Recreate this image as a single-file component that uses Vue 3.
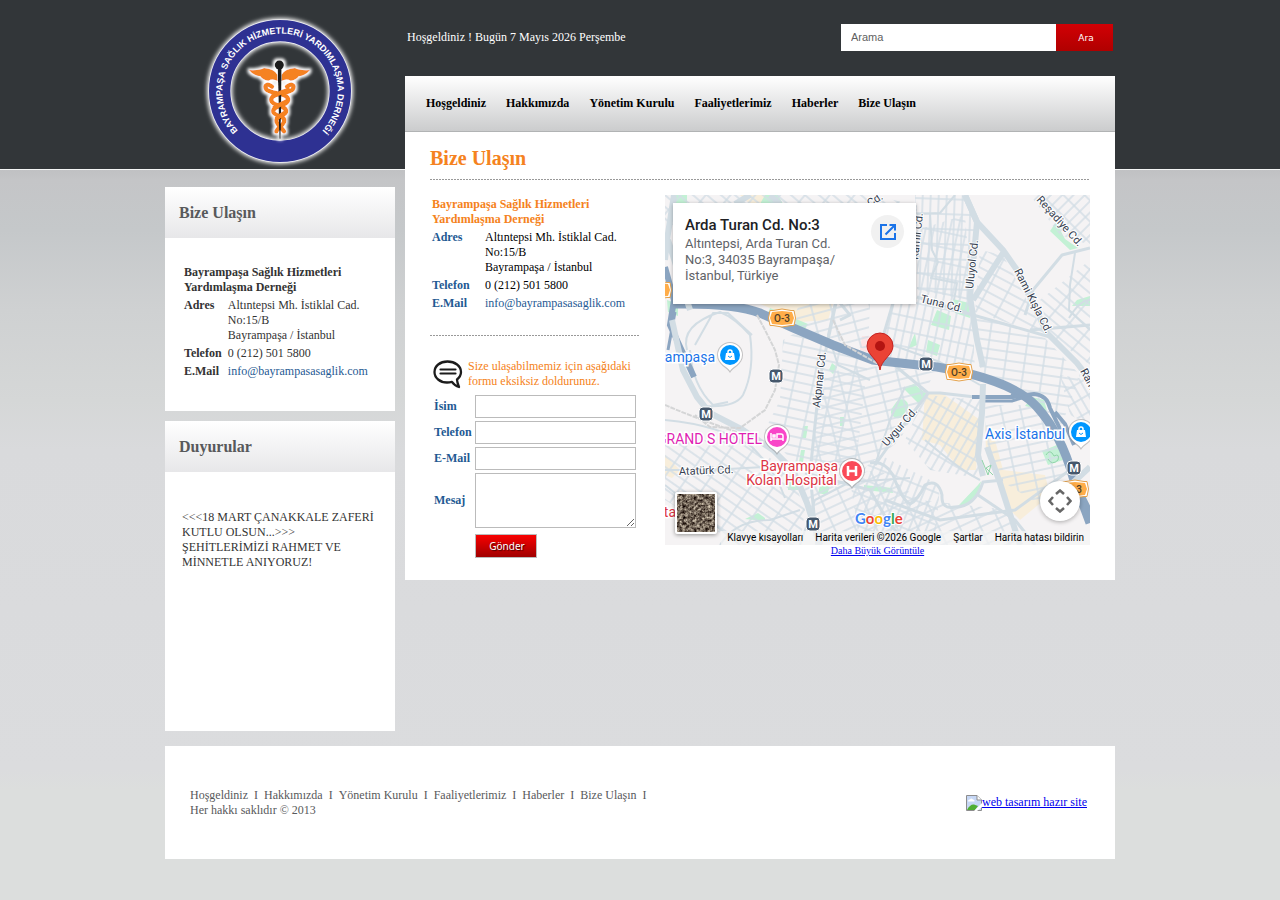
<script setup>
import { ref } from 'vue'

const menu = ['Hoşgeldiniz', 'Hakkımızda', 'Yönetim Kurulu', 'Faaliyetlerimiz', 'Haberler', 'Bize Ulaşın']
const fields = [
  { id: 'isim', label: 'İsim', type: 'text' },
  { id: 'telefon', label: 'Telefon', type: 'tel' },
  { id: 'eposta', label: 'E-Mail', type: 'email' }
]
const form = ref({ isim: '', telefon: '', eposta: '', mesaj: '' })

// Street grids: polygon area, rotation of the grid
const blocks = [
  { p: '783,340 795,333 868,362 855,470 800,470 765,430 780,400', r: 12, g: 'a' },
  { p: '820,375 860,365 935,372 900,440 850,480 812,470', r: -14, g: 'a' },
  { p: '917,230 965,215 972,300 975,372 880,358 893,300 917,296', r: 12, g: 'b' },
  { p: '915,195 965,195 976,225 970,300 917,290', r: 2, g: 'b' },
  { p: '975,315 1045,338 1080,375 1060,430 1035,405 1000,380 980,375', r: 8, g: 'a' },
  { p: '925,395 980,400 978,478 930,470 905,440', r: 30, g: 'b' },
  { p: '985,405 1030,405 1056,440 1070,480 1040,505 1000,480 986,440', r: -12, g: 'a' },
  { p: '665,440 740,440 790,470 805,510 800,545 740,545 665,500', r: 35, g: 'a' },
  { p: '800,480 880,470 920,500 1010,510 1020,545 815,545', r: -25, g: 'a' },
  { p: '850,480 880,455 940,485 935,545 860,545', r: 22, g: 'b' },
  { p: '665,195 870,195 917,205 917,225 665,225', r: 40, g: 'a' },
  { p: '1030,195 1090,195 1090,245 1060,235', r: 45, g: 'b' },
  { p: '980,250 1003,255 1045,335 975,312', r: 28, g: 'a' },
  { p: '1040,300 1090,260 1090,365 1050,335', r: 40, g: 'a' },
  { p: '1060,375 1090,380 1090,425 1070,415', r: -30, g: 'b' },
  { p: '800,303 870,303 868,350 790,325', r: -15, g: 'a' }
]
const metros = [[776, 376], [926, 364], [706, 414], [813, 524], [1074, 468]]
const shields = [[782, 318], [959, 372], [1075, 489], [658, 290]]
const pins = [
  { x: 730, y: 355, c: '#0096ff', k: 'bag' },
  { x: 1081, y: 432, c: '#0096ff', k: 'bag' },
  { x: 777, y: 437, c: '#f946c8', k: 'bed' },
  { x: 852, y: 471, c: '#fa4a58', k: 'hosp' }
]
</script>

<template>
  <div class="site">
    <div class="page">
      <aside class="side">
        <a class="logo" href="#" aria-label="Bayrampaşa Sağlık Hizmetleri Yardımlaşma Derneği">
          <svg viewBox="0 0 540 570" width="180" height="190">
            <defs>
              <filter id="glow" x="-20%" y="-20%" width="140%" height="140%"><feGaussianBlur stdDeviation="6" /></filter>
              <filter id="halo" x="-30%" y="-30%" width="160%" height="160%">
                <feMorphology in="SourceAlpha" operator="dilate" radius="5" />
                <feGaussianBlur stdDeviation="5" result="b" />
                <feFlood flood-color="#fff" />
                <feComposite in2="b" operator="in" />
                <feMerge><feMergeNode /><feMergeNode in="SourceGraphic" /></feMerge>
              </filter>
              <path id="ring" d="M154 402 A173 173 0 1 1 386 402" />
            </defs>
            <circle cx="270" cy="273" r="181" fill="none" stroke="#fff" stroke-width="76" filter="url(#glow)" />
            <circle cx="270" cy="273" r="181" fill="none" stroke="#f1f1f6" stroke-width="68" />
            <circle cx="270" cy="273" r="181" fill="none" stroke="#2e3192" stroke-width="64" />
            <g filter="url(#halo)">
              <g fill="#f58220">
                <path d="M177 210 Q208 212 222 204 Q252 206 262 224 L263 243 Q248 234 235 242 Q219 241 211 229 Q192 228 177 210Z" />
                <path d="M360 210 Q329 212 315 204 Q285 206 275 224 L274 243 Q289 234 302 242 Q318 241 326 229 Q345 228 360 210Z" />
              </g>
              <g fill="none" stroke="#f58220" stroke-linecap="round">
                <path d="M246 260 C232 248 222 256 229 268 C240 282 300 278 294 302 C288 322 246 314 250 336 C254 350 288 346 282 366 C276 380 262 384 259 394" stroke-width="13" />
                <path d="M291 260 C305 248 315 256 308 268 C297 282 238 278 244 302 C250 322 292 314 288 336 C284 350 255 346 260 366 C266 380 276 384 282 394" stroke-width="13" />
              </g>
              <circle cx="268" cy="195" r="14" fill="#1f1d1e" />
              <path d="M263 200H275L272 416H268Z" fill="#1f1d1e" />
              <path d="M246 290 Q272 276 300 268 M250 325 Q275 311 292 303 M258 357 Q275 343 286 337" stroke="#f58220" stroke-width="13" fill="none" />
            </g>
            <text class="logo-text"><textPath href="#ring" startOffset="50%" text-anchor="middle">BAYRAMPAŞA SAĞLIK HİZMETLERİ YARDIMLAŞMA DERNEĞİ</textPath></text>
          </svg>
        </a>

        <section class="panel">
          <h2>Bize Ulaşın</h2>
          <div class="panel-body contact-body">
            <table class="contact">
              <tbody>
                <tr><th colspan="2">Bayrampaşa Sağlık Hizmetleri Yardımlaşma Derneği</th></tr>
                <tr><th>Adres</th><td>Altıntepsi Mh. İstiklal Cad. No:15/B<br>Bayrampaşa / İstanbul</td></tr>
                <tr><th>Telefon</th><td>0 (212) 501 5800</td></tr>
                <tr><th>E.Mail</th><td><a href="mailto:info@bayrampasasaglik.com">info@bayrampasasaglik.com</a></td></tr>
              </tbody>
            </table>
          </div>
        </section>

        <section class="panel">
          <h2>Duyurular</h2>
          <div class="panel-body news">
            <p>&lt;&lt;&lt;18 MART ÇANAKKALE ZAFERİ KUTLU OLSUN...&gt;&gt;&gt;<br>ŞEHİTLERİMİZİ RAHMET VE MİNNETLE ANIYORUZ!</p>
          </div>
        </section>
      </aside>

      <div class="main">
        <header class="top">
          <span class="welcome">Hoşgeldiniz ! Bugün 7 Mayıs 2026 Perşembe</span>
          <form class="search" @submit.prevent>
            <input type="text" placeholder="Arama" aria-label="Arama">
            <button type="submit">Ara</button>
          </form>
        </header>
        <nav class="menu">
          <a v-for="m in menu" :key="m" href="#">{{ m }}</a>
        </nav>
        <main class="content">
          <h1>Bize Ulaşın</h1>
          <div class="columns">
            <div class="info">
              <table class="contact wide">
                <tbody>
                  <tr><th colspan="2" class="org">Bayrampaşa Sağlık Hizmetleri Yardımlaşma Derneği</th></tr>
                  <tr><th>Adres</th><td>Altıntepsi Mh. İstiklal Cad. No:15/B<br>Bayrampaşa / İstanbul</td></tr>
                  <tr><th>Telefon</th><td>0 (212) 501 5800</td></tr>
                  <tr><th>E.Mail</th><td><a href="mailto:info@bayrampasasaglik.com">info@bayrampasasaglik.com</a></td></tr>
                </tbody>
              </table>
              <form class="write" @submit.prevent>
                <div class="intro">
                  <svg viewBox="0 0 30 30" width="30" height="30" fill="none" stroke="#1c1c1c">
                    <path d="M14.500 2.500C7 2.500 1.500 7 1.500 13C1.500 19 7 23.500 14 23.500C16 23.500 17.500 23.200 19 22.800C20.500 25 22.500 27 26 28C25 25.500 24 22.500 24 20.500C26.500 18.500 28 16 28 13C28 7 22 2.500 14.500 2.500Z" stroke-width="2.300" stroke-linejoin="round" />
                    <path d="M7.500 10.500H22.500M7.500 14.500H22.500" stroke-width="2.200" stroke-linecap="round" />
                  </svg>
                  <p>Size ulaşabilmemiz için aşağıdaki formu eksiksiz doldurunuz.</p>
                </div>
                <div class="grid">
                  <template v-for="f in fields" :key="f.id">
                    <label :for="f.id">{{ f.label }}</label>
                    <input :id="f.id" v-model="form[f.id]" :type="f.type">
                  </template>
                  <label for="mesaj">Mesaj</label>
                  <textarea id="mesaj" v-model="form.mesaj"></textarea>
                  <button type="submit">Gönder</button>
                </div>
              </form>
            </div>

            <div class="map-col">
              <div class="map">
                <svg class="canvas" viewBox="665 195 425 350" preserveAspectRatio="xMidYMid slice">
                  <defs>
                    <pattern id="ga" width="19" height="9" patternUnits="userSpaceOnUse"><path d="M0 1H19M1 0V9" stroke="#d3dee6" stroke-width="1.500" fill="none" /></pattern>
                    <pattern id="gb" width="8" height="15" patternUnits="userSpaceOnUse"><path d="M0 1H8M1 0V15" stroke="#d3dee6" stroke-width="1.500" fill="none" /></pattern>
                    <pattern v-for="(b, i) in blocks" :id="'g' + i" :key="'p' + i" :href="'#g' + b.g" :patternTransform="`rotate(${b.r})`" />
                  </defs>
                  <rect x="665" y="195" width="425" height="350" fill="#f5f3f4" />
                  <g fill="#f8eedb">
                    <path d="M760 304H833L828 320L800 322L775 310Z" />
                    <path d="M925 393L942 393L980 420L976 470L960 470L940 445L922 440Z" />
                    <path d="M985 425L995 440L1003 470L1045 475L1050 495L1020 520L1010 510L986 450Z" />
                    <path d="M665 455L680 470L672 478L665 475ZM740 195L775 195L778 204H750Z" />
                  </g>
                  <g fill="#c3f1d5">
                    <path d="M673 195H687V204H673Z" />
                    <path d="M765 195H778L783 204H760Z" />
                    <path d="M667 300L678 304V316L668 312Z" />
                    <path d="M770 308L808 324L803 332L768 313Z" />
                    <path d="M953 299L969 303L970 318L955 313Z" />
                    <path d="M937 310L951 316L949 330L931 325Z" />
                    <path d="M928 340L940 345L937 356L926 352Z" />
                    <path d="M915 333L917 345L908 349Z" />
                    <path d="M1056 222L1065 239L1078 248L1070 250L1050 231Z" />
                    <path d="M1077 300L1090 296V306H1072Z" />
                    <path d="M903 388L914 384L927 394L920 405Z" />
                    <rect x="893" y="399" width="13" height="20" rx="6" transform="rotate(35 900 409)" />
                    <path d="M1042 451L1057 445L1063 460L1048 465Z" />
                    <path d="M1032 397L1044 400L1047 411L1025 406Z" />
                    <path d="M981 481L979 492L964 507H957Z" />
                    <path d="M803 426H808L806 438H802ZM801 450H805L803 462H799ZM840 417H844V426H840Z" />
                    <path d="M788 482L798 480L803 490H788ZM820 486L830 486L827 495L818 493ZM864 485L892 488L893 493L864 490Z" />
                    <path d="M758 513L765 518V521L745 519ZM832 363L837 367L833 374L829 370Z" />
                  </g>
                  <path d="M862 336H870V353L860 350Z" fill="#fde4e4" />
                  <polygon v-for="(b, i) in blocks" :key="i" :points="b.p" :fill="`url(#g${i})`" />
                  <path d="M945 500Q955 480 970 482L982 480L978 485L957 507Z" fill="#f5f3f4" />
                  <g class="road thin">
                    <path d="M687 350Q680 325 720 312Q735 318 750 335Q755 370 743 395Q735 408 705 406M695 345L713 313H728L752 335M690 350Q692 385 713 405L728 402" />
                    <path d="M665 420Q720 425 752 447Q775 470 785 498M665 470L710 470L800 465L860 460M665 485L740 545" />
                    <path d="M800 545L815 500L850 482L910 478M720 545Q735 520 770 520L800 510" />
                    <path d="M835 303L828 335L838 365L870 380M925 440Q960 470 980 480" />
                    <path d="M1075 253L1070 285L1069 310L1090 330M1069 318Q1080 300 1090 300" />
                    <path d="M930 213L932 250L938 262L931 278L957 283L954 300M917 214L940 213L955 195" />
                    <path d="M878 340L940 362L980 385M905 387L890 420L875 465" />
                  </g>
                  <g class="road mid">
                    <path d="M1090 248L1062 255L1033 290L1025 315" />
                    <path d="M917 297L973 315L1050 337" />
                    <path d="M893 303L877 357" />
                    <path d="M836 303L820 377L810 473L817 545" />
                    <path d="M870 463Q884 460 893 475Q902 500 910 504Q918 500 925 485Q938 478 942 495Q941 510 955 507Q975 507 983 482L1003 480" />
                    <path d="M870 345L928 393L940 393L975 397" />
                    <path d="M928 393L900 430L875 465M885 500L940 520L1015 510L1070 470" />
                    <path d="M805 473L870 490L890 525L910 545M978 495L1015 520L1035 545" />
                    <path d="M840 320L850 315L840 303M1030 330L1090 325" />
                  </g>
                  <g fill="none" stroke="#8ba5c1">
                    <path d="M665 267L674 300L670 325L694 377" stroke-width="6" />
                    <path d="M674 304Q735 303 760 313L793 328L833 345L873 360L937 367Q1013 380 1037 407T1073 477L1090 523" stroke-width="9" />
                    <path d="M972 397L1013 397L1025 395L1034 394Q1047 395 1050 408L1063 435M1055 412L1065 424L1074 445M1075 480L1090 510" stroke-width="4" />
                    <path d="M984 401H1012L1025 397M675 312L668 350M1015 391L1010 398" stroke-width="3" />
                  </g>
                  <g class="road big">
                    <path d="M674 195L667 240L665 260M668 240L690 310" />
                    <path d="M672 320L683 370L697 397L710 413L743 430L773 450L793 470L807 503L820 545" />
                    <path d="M983 384L982 413L978 455L983 476M965 195L977 222L970 297L977 340L983 367M987 447L1000 483L1020 545" />
                    <path d="M965 195L977 222L1003 250L1017 270L1047 333L1077 363L1090 380M1003 253L973 300" />
                    <path d="M735 204L750 195M780 204L770 195M1090 467L1065 490" />
                  </g>
                  <path d="M757 315L765 330L775 350L779 365L775 390L765 410L740 428L710 427L695 415M833 320L845 345L880 365M665 405Q700 420 740 433" fill="none" stroke="#d4d5d6" stroke-width="2" stroke-dasharray="5 1" />
                  <path d="M982 460L988 475L991 465L986 468L993 475M1046 455Q1050 448 1054 456Q1060 453 1058 460Q1052 466 1048 459" fill="none" stroke="#91d4aa" />
                  <g class="street">
                    <text transform="translate(820 408) rotate(-84)">Akpınar Cd.</text>
                    <text transform="translate(887 447) rotate(-49)">Uygur Cd.</text>
                    <text transform="translate(920 302) rotate(14)">Tuna Cd.</text>
                    <text transform="translate(1014 271) rotate(63)">Rami Kışla Cd.</text>
                    <text transform="translate(973 289) rotate(-84)">Uluyol Cd.</text>
                    <text transform="translate(1036 200) rotate(48)">Reşadiye Cd.</text>
                    <text transform="translate(918 260) rotate(-84)">Kamil Cd.</text>
                    <text transform="translate(1080 371) rotate(62)">Rami Kışla</text>
                    <text transform="translate(870 207) rotate(-32)">Cd.</text>
                    <text transform="translate(679 475) rotate(-2)">Atatürk Cd.</text>
                  </g>
                  <g v-for="(s, i) in shields" :key="'s' + i" :transform="`translate(${s[0]} ${s[1]})`">
                    <path d="M0 -9L9 -7.500H12L13.500 0L12 7.500H9L0 9L-9 7.500H-12L-13.500 0L-12 -7.500H-9Z" fill="#fff" stroke="#e5a24c" />
                    <path d="M0 -7L10 -6L12 0L10 6L0 7L-10 6L-12 0L-10 -6Z" fill="#ffad49" />
                    <text v-if="i < 3" class="shield" :x="i === 2 ? 4 : 0" y="4">{{ i === 2 ? '3' : 'O-3' }}</text>
                  </g>
                  <g v-for="(m, i) in metros" :key="'m' + i" :transform="`translate(${m[0]} ${m[1]})`">
                    <rect x="-7" y="-7" width="14" height="14" rx="4" fill="#46586c" stroke="#fff" />
                    <text class="metro" y="4">M</text>
                  </g>
                  <g v-for="(p, i) in pins" :key="'n' + i" :transform="`translate(${p.x} ${p.y})`">
                    <path d="M0 18C-2 13 -13 10 -13 0A13 13 0 1 1 13 0C13 10 2 13 0 18Z" fill="#777" opacity=".4" />
                    <path d="M0 16C-2 12 -12 9 -12 0A12 12 0 1 1 12 0C12 9 2 12 0 16Z" fill="#fff" />
                    <circle r="10" :fill="p.c" />
                    <g v-if="p.k === 'bag'">
                      <path d="M-4 -2H4L5 5H-5Z" fill="#fff" />
                      <path d="M-2 -1V-3A2 2 0 0 1 2 -3V-1" fill="none" stroke="#fff" stroke-width="1.500" />
                      <path d="M-2 1Q0 4 2 1" fill="none" :stroke="p.c" />
                    </g>
                    <g v-else-if="p.k === 'bed'" fill="none" stroke="#fff" stroke-width="1.500">
                      <path d="M-6 -4V4M-6 2H6M6 4V-1Q6 -3 4 -3H0V1" />
                      <rect x="-4" y="-2" width="2" height="2" />
                    </g>
                    <path v-else d="M-4 -5V5M4 -5V5M-4 0H4" stroke="#fff" stroke-width="2.500" />
                  </g>
                  <g class="poi">
                    <text x="715" y="362" text-anchor="end" fill="#1a73e8">Bayrampaşa</text>
                    <text x="985" y="439" fill="#1a73e8">Axis İstanbul</text>
                    <text x="762" y="444" text-anchor="end" fill="#e01fb3">GRAND S HOTEL</text>
                    <text x="838" y="471" text-anchor="end" fill="#dc3545">Bayrampaşa</text>
                    <text x="837" y="485" text-anchor="end" fill="#dc3545">Kolan Hospital</text>
                    <text x="676" y="517" text-anchor="end" fill="#dc3545">Hasta</text>
                  </g>
                  <path d="M880 370C879 360 867 355 867 346A13 13 0 1 1 893 346C893 355 881 360 880 370Z" fill="#ea4335" stroke="#c5221f" />
                  <circle cx="880" cy="346" r="5" fill="#b31412" />
                  <text class="google" x="855" y="524"><tspan fill="#4285f4">G</tspan><tspan fill="#ea4335">o</tspan><tspan fill="#fbbc04">o</tspan><tspan fill="#4285f4">g</tspan><tspan fill="#34a853">l</tspan><tspan fill="#ea4335">e</tspan></text>
                </svg>

                <div class="card">
                  <div>
                    <strong>Arda Turan Cd. No:3</strong>
                    <p>Altıntepsi, Arda Turan Cd.<br>No:3, 34035 Bayrampaşa/<br>İstanbul, Türkiye</p>
                  </div>
                  <a class="open" href="#" aria-label="Haritalar'da aç">
                    <svg viewBox="0 0 20 20" width="20" height="20" fill="none" stroke="#1a73e8" stroke-width="2">
                      <path d="M9 3H3V17H17V11M11.500 3H17V8.500M17 3L7.500 12.500" />
                    </svg>
                  </a>
                </div>
                <button class="sat" type="button" aria-label="Uydu görüntüleri">
                  <svg viewBox="0 0 38 38" width="38" height="38">
                    <filter id="ground" x="0" y="0" width="100%" height="100%" color-interpolation-filters="sRGB">
                      <feTurbulence type="fractalNoise" baseFrequency=".35" numOctaves="4" seed="11" />
                      <feColorMatrix values="1.2 .3 0 0 -.3  1.2 .3 0 0 -.35  1.1 .3 0 0 -.35  0 0 0 0 1" />
                    </filter>
                    <rect width="38" height="38" filter="url(#ground)" />
                  </svg>
                </button>
                <button class="pan" type="button" aria-label="Harita kamerası kontrolleri">
                  <svg viewBox="0 0 24 24" width="24" height="24" fill="none" stroke="#666" stroke-width="2.500">
                    <path d="M8 5L12 1.500L16 5M8 19L12 22.500L16 19M5 8L1.500 12L5 16M19 8L22.500 12L19 16" />
                  </svg>
                </button>
                <div class="credits">
                  <button type="button">Klavye kısayolları</button>
                  <span>Harita verileri ©2026 Google</span>
                  <a href="#">Şartlar</a>
                  <a href="#">Harita hatası bildirin</a>
                </div>
              </div>
              <a class="bigger" href="#">Daha Büyük Görüntüle</a>
            </div>
          </div>
        </main>
      </div>

      <footer class="foot">
        <div>
          <div class="links"><template v-for="m in menu" :key="m"><a href="#">{{ m }}</a>&nbsp; I &nbsp;</template></div>
          <div>Her hakkı saklıdır © 2013</div>
        </div>
        <a class="credit" href="#">
          <svg viewBox="0 0 16 16" width="16" height="16">
            <path d="M.5 .5H11L15.500 5V15.500H.5Z" fill="#c6d7f5" stroke="#8d8d8d" />
            <path d="M2 6.500Q2 4 4 4.500Q5 2.500 7 4.500Q9 4.500 8.500 6.500Z" fill="#fff" />
            <path d="M1 15Q4 9 8 9.500L12 11L9 15Z" fill="#4fae33" />
            <path d="M11 .5V5H15.500" fill="#fff" stroke="#8d8d8d" />
            <path d="M16 8L8 16H11L16 12Z" fill="#fff" />
          </svg>web tasarım hazır site</a>
      </footer>
    </div>
  </div>
</template>

<style>
body {
  margin: 0;
}
</style>

<style scoped>
* {
  box-sizing: border-box;
}
.site {
  min-height: 100vh;
  padding: 0 16px 41px;
  font: 12px/15px "Liberation Serif", "Times New Roman", serif;
  color: #000;
  background: linear-gradient(#323639 169px, #f4f5f5 169px, #f4f5f5 170px, #c0c1c3 170px, #c4c5c7 180px, #c5c8ca 230px, #cfd1d2 310px, #d5d7d7 400px, #d9dadc 450px, #dbdcde 770px, #dcdedd 790px);
}
.page {
  max-width: 950px;
  margin: 0 auto;
  display: grid;
  grid-template-columns: 230px minmax(0, 1fr);
  column-gap: 10px;
  row-gap: 15px;
  align-items: start;
}
a {
  color: inherit;
  text-decoration: none;
}
h1, h2, p {
  margin: 0;
}
.logo {
  display: block;
  height: 187px;
  padding-left: 25px;
}
.logo svg {
  display: block;
}
.logo-text {
  font: bold 27px "Liberation Sans", Arial, sans-serif;
  fill: #fff;
}
.panel {
  background: #fff;
}
.panel + .panel {
  margin-top: 10px;
}
.panel h2 {
  height: 51px;
  padding-left: 14px;
  font-size: 16px;
  line-height: 51px;
  color: #58595b;
  background: linear-gradient(#fff, #e7e7e9);
}
.contact-body {
  min-height: 173px;
  padding: 24px 8px 0 16px;
  color: #333;
}
.contact {
  border-spacing: 3px;
  border-collapse: separate;
}
.contact th,
.contact td {
  padding: 0;
  text-align: left;
  vertical-align: top;
}
.contact a {
  color: #1f5a93;
}
.contact tr + tr th {
  padding-right: 2px;
}
.contact-body .contact {
  width: 200px;
}
.news {
  min-height: 259px;
  padding: 38px 17px 0;
  color: #333;
}
.top {
  height: 76px;
  padding: 0 2px 2px;
  display: flex;
  justify-content: space-between;
  align-items: center;
  color: #fff;
}
.search {
  display: flex;
}
.search input {
  width: 215px;
  height: 27px;
  padding: 0 10px;
  border: 0;
  background: #fff;
  font: 11px "Liberation Sans", Arial, sans-serif;
}
.search input::placeholder {
  color: #5f5f5f;
}
.search button {
  width: 57px;
  height: 27px;
  padding: 2px 0 0 3px;
  border: 0;
  color: #fff;
  font: 9px "DejaVu Sans", sans-serif;
  background: linear-gradient(#d20005, #b00000);
}
.menu {
  min-height: 56px;
  padding: 0 21px;
  display: flex;
  flex-wrap: wrap;
  align-items: center;
  gap: 20px;
  font-weight: bold;
  border-bottom: 1px solid #b1b3b4;
  background: linear-gradient(#fff, #cbcccd);
}
.content {
  padding: 0 25px 22px;
  background: #fff;
}
.content h1,
.write {
  background: repeating-linear-gradient(90deg, #999 0 2px, #fff 2px 3px) bottom / 100% 1px no-repeat;
}
.content h1 {
  height: 48px;
  padding-top: 14px;
  font-size: 20px;
  line-height: 24px;
  color: #f58220;
}
.columns {
  padding-top: 15px;
  display: grid;
  grid-template-columns: 209px minmax(0, 1fr);
  gap: 26px;
}
.wide {
  width: 209px;
  margin-left: -1px;
  margin-top: -1px;
}
.wide tr + tr th {
  width: 50px;
  color: #1f5a93;
}
.wide .org {
  padding-right: 20px;
  color: #f58220;
}
.write {
  margin-top: 21px;
  padding: 24px 3px 0;
  background-position: top;
}
.intro {
  display: flex;
  gap: 5px;
  color: #f58220;
}
.intro svg {
  flex: none;
}
.grid {
  margin: 6px 0 0 1px;
  display: grid;
  grid-template-columns: 38px 161px;
  gap: 3px;
  align-items: center;
}
.grid label {
  color: #1f5a93;
  font-weight: bold;
}
.grid input,
.grid textarea {
  display: block;
  width: 100%;
  height: 23px;
  border: 1px solid #bbb;
  background: #fff;
}
.grid textarea {
  height: 55px;
}
.grid button {
  grid-column: 2;
  width: 62px;
  height: 24px;
  margin-top: 3px;
  padding: 0 0 0 2px;
  border: 1px solid #bbb;
  color: #fff;
  font: 10px "Noto Sans", sans-serif;
  text-shadow: 1px 1px 1px #400;
  background: linear-gradient(#f80000, #a00000);
}
.map {
  position: relative;
  height: 350px;
  overflow: hidden;
  font-family: Roboto, sans-serif;
}
.canvas {
  display: block;
  width: 100%;
  height: 350px;
}
.road {
  fill: none;
  stroke: #d2dde4;
  stroke-linejoin: round;
}
.thin {
  stroke-width: 2;
}
.mid {
  stroke-width: 3;
}
.big {
  stroke-width: 6;
}
.street text {
  font-size: 11px;
  fill: #374151;
  stroke: #fff;
  stroke-width: 2px;
  paint-order: stroke;
}
.poi text {
  font-size: 14px;
  stroke: #fff;
  stroke-width: 3px;
  paint-order: stroke;
}
.shield {
  font-size: 10px;
  font-weight: 500;
  text-anchor: middle;
  fill: #4d3d28;
}
.metro {
  font-size: 11px;
  font-weight: bold;
  text-anchor: middle;
  fill: #fff;
}
.google {
  font: bold 15px Lato, sans-serif;
  stroke: #fff;
  stroke-width: 2px;
  paint-order: stroke;
}
.card {
  position: absolute;
  top: 8px;
  left: 8px;
  width: 243px;
  height: 101px;
  padding: 12px;
  display: flex;
  justify-content: space-between;
  background: #fff;
  box-shadow: 0 1px 4px rgba(0, 0, 0, .3);
}
.card strong {
  display: block;
  font-size: 15px;
  line-height: 21px;
  font-weight: 500;
  color: #202124;
}
.card p {
  font-size: 13px;
  line-height: 16px;
  color: #5f6368;
}
.open {
  width: 33px;
  height: 33px;
  display: grid;
  place-items: center;
  border-radius: 50%;
  background: #f1f1f1;
}
.sat {
  position: absolute;
  left: 10px;
  bottom: 11px;
  padding: 2px;
  border: 0;
  border-radius: 2px;
  background: #fff;
  box-shadow: 0 1px 4px rgba(0, 0, 0, .4);
}
.sat svg {
  display: block;
}
.pan {
  position: absolute;
  right: 10px;
  bottom: 24px;
  width: 40px;
  height: 40px;
  padding: 0;
  display: grid;
  place-items: center;
  border: 0;
  border-radius: 50%;
  background: #fff;
  box-shadow: 0 1px 4px rgba(0, 0, 0, .3);
}
.credits {
  position: absolute;
  right: 0;
  bottom: 0;
  padding: 0 6px;
  display: flex;
  gap: 12px;
  font-size: 10px;
  line-height: 14px;
  color: #000;
  background: rgba(245, 245, 245, .7);
}
.credits button {
  padding: 0;
  border: 0;
  font: inherit;
  color: inherit;
  background: none;
}
.bigger {
  display: block;
  font-size: 10px;
  line-height: 12px;
  text-align: center;
  color: #00e;
  text-decoration: underline;
}
.foot {
  grid-column: 1 / -1;
  min-height: 113px;
  padding: 0 28px 0 25px;
  display: flex;
  align-items: center;
  justify-content: space-between;
  color: #58595b;
  background: #fff;
}
.credit {
  color: #00e;
  text-decoration: underline;
}
.credit svg {
  vertical-align: -5px;
}
</style>
